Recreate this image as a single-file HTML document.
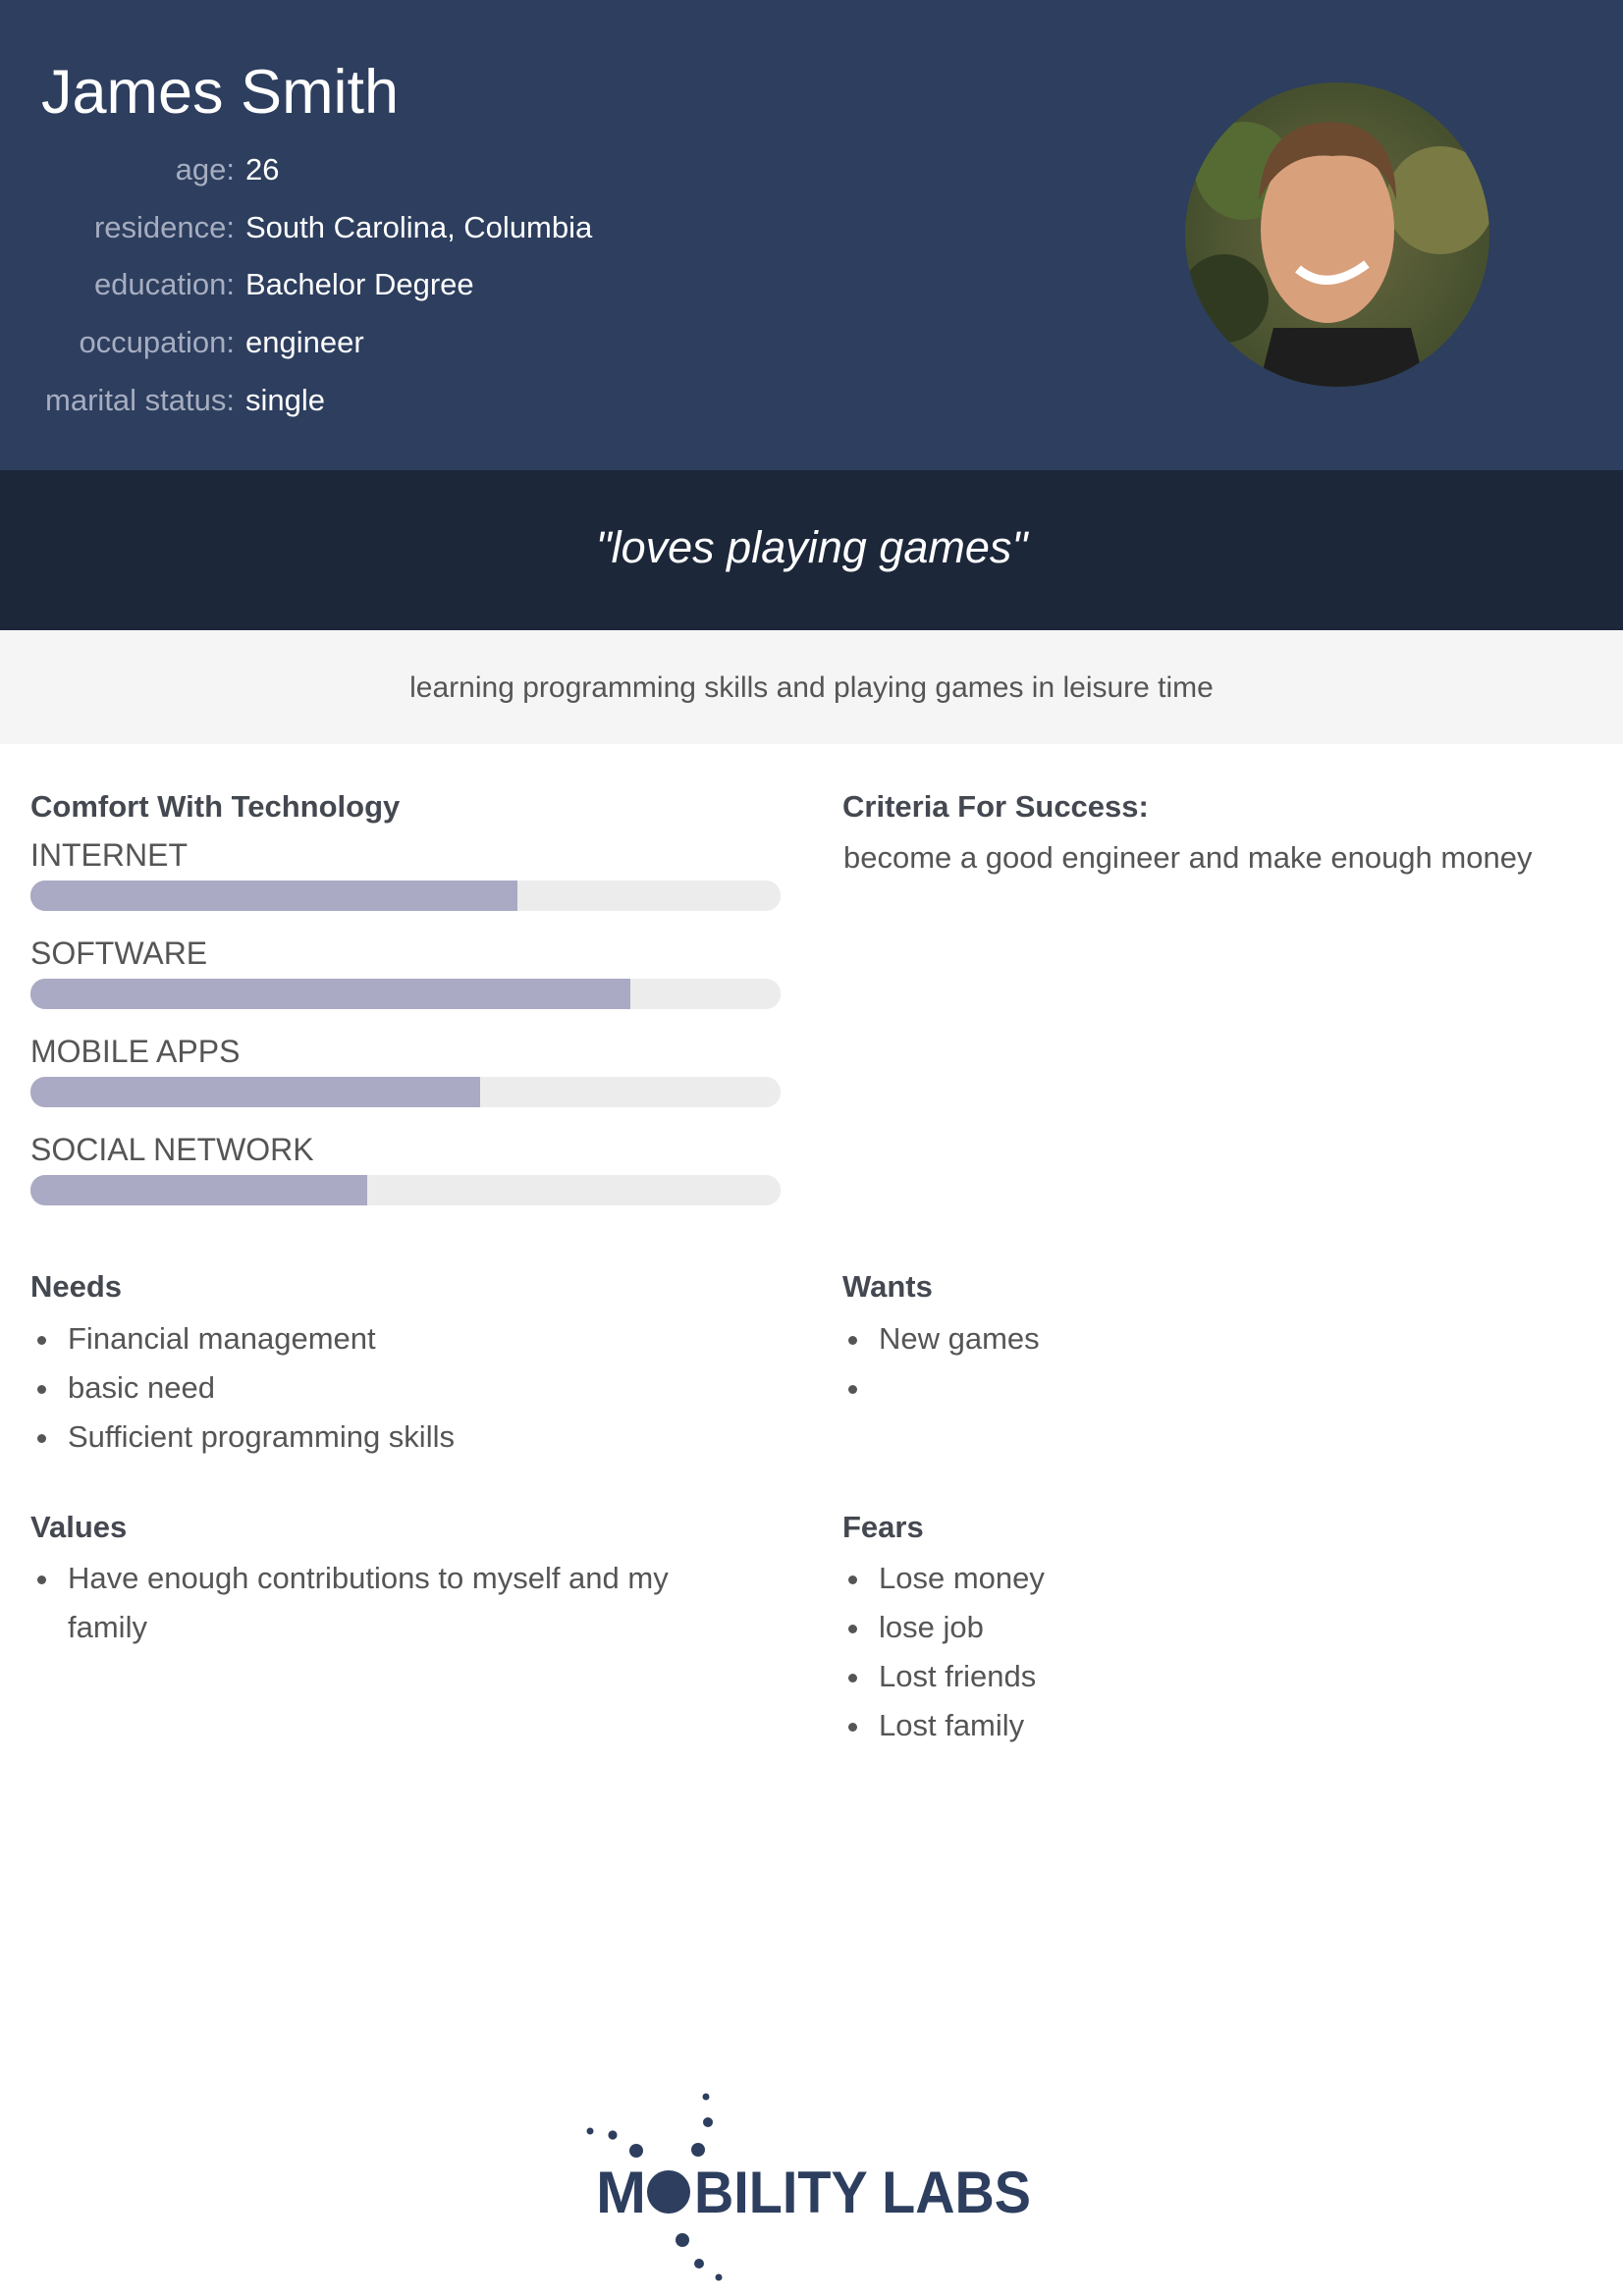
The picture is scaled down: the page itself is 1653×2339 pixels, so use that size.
<!DOCTYPE html>
<html><head><meta charset="utf-8"><style>
*{margin:0;padding:0;box-sizing:border-box}
body{width:1653px;height:2339px;background:#fff;font-family:"Liberation Sans",sans-serif;position:relative;overflow:hidden}
.a{position:absolute;white-space:nowrap}
.hdr{position:absolute;left:0;top:0;width:1653px;height:479px;background:#2d3e5e}
.q{position:absolute;left:0;top:479px;width:1653px;height:163px;background:#1c273a}
.g{position:absolute;left:0;top:642px;width:1653px;height:116px;background:#f5f5f5}
.lab{position:absolute;right:1414px;color:#a6adc0;font-size:31px;line-height:40px}
.val{position:absolute;left:250px;color:#fff;font-size:31px;line-height:40px}
.h{position:absolute;font-weight:bold;color:#444850;font-size:31px;line-height:40px}
.t{position:absolute;color:#555;font-size:31px;line-height:40px;white-space:nowrap}
.cap{position:absolute;left:31px;color:#555;font-size:32px;line-height:40px}
.bar{position:absolute;left:31px;width:764px;height:31px;background:#ececec;border-radius:15px;overflow:hidden}
.bar div{height:100%;background:#aaaac4}
.li{position:absolute;color:#555;font-size:31px;line-height:40px;white-space:nowrap}
.li:before{content:"";position:absolute;left:-31px;top:17px;width:9px;height:9px;border-radius:50%;background:#555}
</style></head><body>
<div class="hdr"></div>
<div class="a" style="left:42px;top:54px;font-size:63px;color:#fff;line-height:80px">James Smith</div>
<div class="lab" style="top:153px">age:</div><div class="val" style="top:153px">26</div>
<div class="lab" style="top:212px">residence:</div><div class="val" style="top:212px">South Carolina, Columbia</div>
<div class="lab" style="top:270px">education:</div><div class="val" style="top:270px">Bachelor Degree</div>
<div class="lab" style="top:329px">occupation:</div><div class="val" style="top:329px">engineer</div>
<div class="lab" style="top:388px">marital status:</div><div class="val" style="top:388px">single</div>
<svg class="a" style="left:1207px;top:84px" width="310" height="310" viewBox="0 0 310 310">
<defs><clipPath id="c"><circle cx="155" cy="155" r="155"/></clipPath>
<radialGradient id="bg" cx="0.5" cy="0.5" r="0.6"><stop offset="0" stop-color="#6a6a40"/><stop offset="1" stop-color="#3e4a2a"/></radialGradient></defs>
<g clip-path="url(#c)">
<rect width="310" height="310" fill="url(#bg)"/>
<circle cx="60" cy="90" r="50" fill="#556b33"/><circle cx="260" cy="120" r="55" fill="#7a7a45"/><circle cx="40" cy="220" r="45" fill="#2f3a20"/>
<path d="M70 330 L90 250 L230 250 L250 330Z" fill="#1e1e1e"/>
<ellipse cx="145" cy="150" rx="68" ry="95" fill="#d9a07c"/>
<path d="M75 120 Q80 40 150 40 Q215 45 215 120 Q200 70 150 75 Q100 70 75 120Z" fill="#6b4a30"/>
<path d="M115 190 Q145 215 185 185" stroke="#fff" stroke-width="9" fill="none"/>
</g></svg>
<div class="q"></div>
<div class="a" style="left:0;width:1653px;text-align:center;top:530px;font-size:45px;font-style:italic;color:#fff;line-height:56px">"loves playing games"</div>
<div class="g"></div>
<div class="a" style="left:0;width:1653px;text-align:center;top:681px;font-size:30px;color:#555;line-height:40px">learning programming skills and playing games in leisure time</div>

<div class="h" style="left:31px;top:802px">Comfort With Technology</div>
<div class="cap" style="top:851px">INTERNET</div>
<div class="bar" style="top:897px"><div style="width:496px"></div></div>
<div class="cap" style="top:951px">SOFTWARE</div>
<div class="bar" style="top:997px"><div style="width:611px"></div></div>
<div class="cap" style="top:1051px">MOBILE APPS</div>
<div class="bar" style="top:1097px"><div style="width:458px"></div></div>
<div class="cap" style="top:1151px">SOCIAL NETWORK</div>
<div class="bar" style="top:1197px"><div style="width:343px"></div></div>

<div class="h" style="left:858px;top:802px">Criteria For Success:</div>
<div class="t" style="left:859px;top:854px">become a good engineer and make enough money</div>

<div class="h" style="left:31px;top:1291px">Needs</div>
<div class="li" style="left:69px;top:1344px">Financial management</div>
<div class="li" style="left:69px;top:1394px">basic need</div>
<div class="li" style="left:69px;top:1444px">Sufficient programming skills</div>

<div class="h" style="left:858px;top:1291px">Wants</div>
<div class="li" style="left:895px;top:1344px">New games</div>
<div class="li" style="left:895px;top:1394px">&nbsp;</div>

<div class="h" style="left:31px;top:1536px">Values</div>
<div class="li" style="left:69px;top:1588px">Have enough contributions to myself and my</div>
<div class="t" style="left:69px;top:1638px">family</div>

<div class="h" style="left:858px;top:1536px">Fears</div>
<div class="li" style="left:895px;top:1588px">Lose money</div>
<div class="li" style="left:895px;top:1638px">lose job</div>
<div class="li" style="left:895px;top:1688px">Lost friends</div>
<div class="li" style="left:895px;top:1738px">Lost family</div>

<svg class="a" style="left:0;top:0" width="1653" height="2339">
<g fill="#2d3e5e" transform="translate(0,-7)">
<circle cx="601" cy="2178" r="3.5"/><circle cx="624" cy="2182" r="4.6"/><circle cx="648" cy="2198" r="7"/>
<circle cx="711" cy="2197" r="7"/><circle cx="721" cy="2169" r="5"/><circle cx="719" cy="2143" r="3.5"/>
<circle cx="695" cy="2289" r="7"/><circle cx="712" cy="2313" r="5"/><circle cx="732" cy="2327" r="3.5"/>
<circle cx="681" cy="2240" r="22"/>
<text x="607" y="2261" font-family="Liberation Sans" font-weight="bold" font-size="60" textLength="51" lengthAdjust="spacingAndGlyphs">M</text>
<text x="707" y="2261" font-family="Liberation Sans" font-weight="bold" font-size="60" textLength="343" lengthAdjust="spacingAndGlyphs">BILITY LABS</text>
</g></svg>
</body></html>
